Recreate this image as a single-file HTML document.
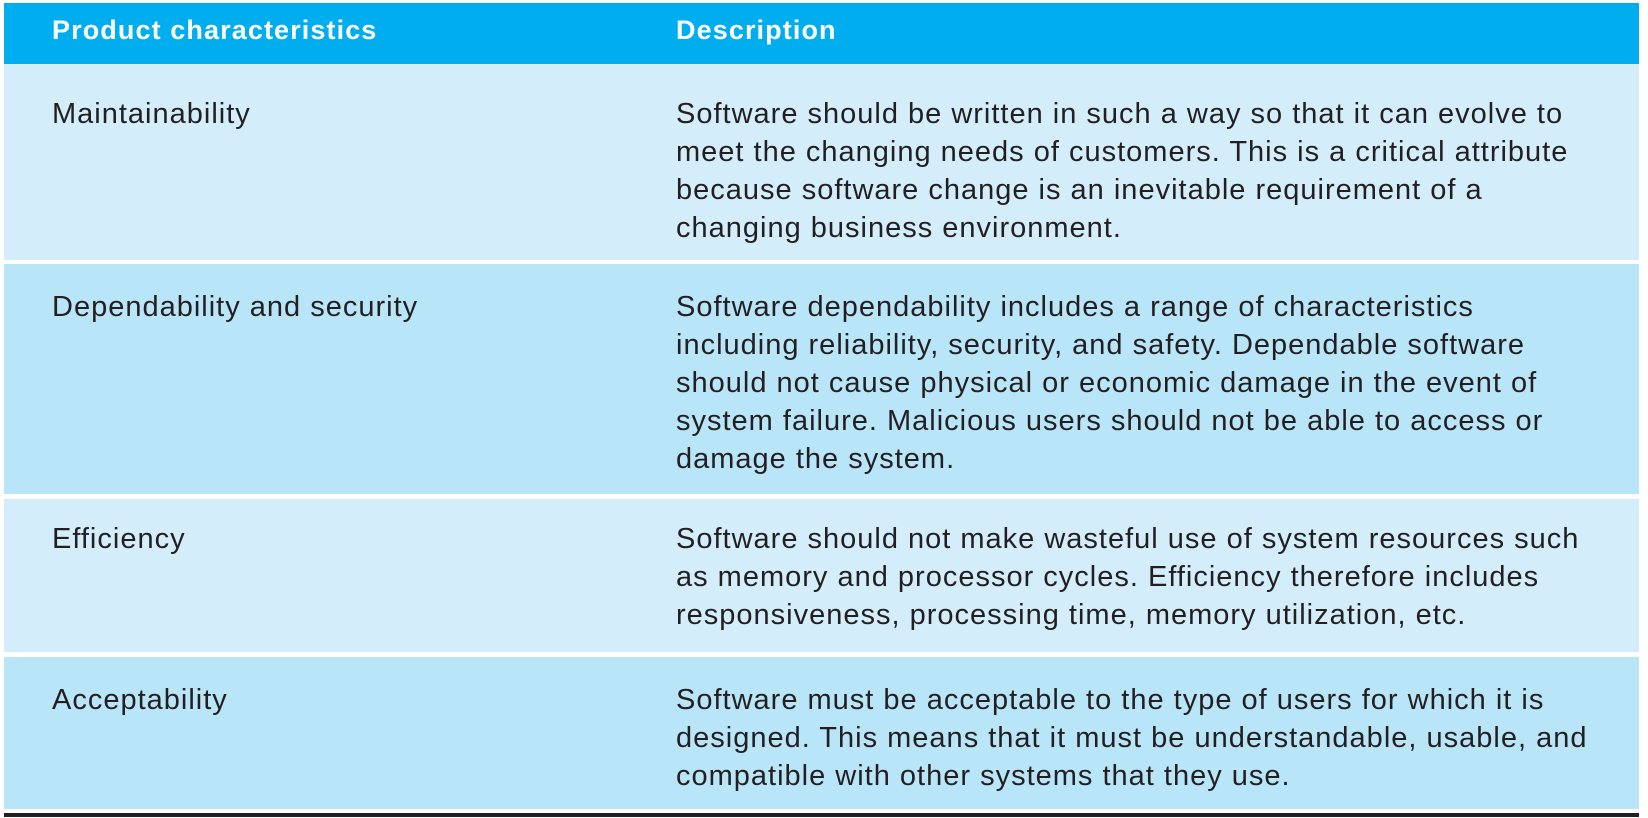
<!DOCTYPE html>
<html><head><meta charset="utf-8"><style>
*{margin:0;padding:0;box-sizing:border-box}
body{width:1648px;height:818px;background:#fff;position:relative;overflow:hidden;font-family:"Liberation Sans",sans-serif;color:#231f20}
.r{position:absolute;left:4px;width:1635px}
.t{position:absolute;font-size:29px;letter-spacing:1px;line-height:38px;white-space:nowrap}
.h{position:absolute;font-size:27px;letter-spacing:1.1px;font-weight:bold;color:#fff;line-height:30px;white-space:nowrap}
</style></head><body>
<div class="r" style="top:3px;height:61px;background:#00aeef"></div>
<div class="h" style="left:52px;top:15px">Product characteristics</div>
<div class="h" style="left:676px;top:15px">Description</div>

<div class="r" style="top:64px;height:196px;background:#d3eefa"></div>
<div class="r" style="top:264px;height:230px;background:#b9e5f9"></div>
<div class="r" style="top:499px;height:153px;background:#d3eefa"></div>
<div class="r" style="top:657px;height:152px;background:#b9e5f9"></div>
<div class="r" style="top:813px;height:4px;background:#231f20"></div>

<div class="t" style="left:52px;top:95px">Maintainability</div>
<div class="t" style="left:676px;top:95px">Software should be written in such a way so that it can evolve to<br>meet the changing needs of customers. This is a critical attribute<br>because software change is an inevitable requirement of a<br>changing business environment.</div>

<div class="t" style="left:52px;top:288px">Dependability and security</div>
<div class="t" style="left:676px;top:288px">Software dependability includes a range of characteristics<br>including reliability, security, and safety. Dependable software<br>should not cause physical or economic damage in the event of<br>system failure. Malicious users should not be able to access or<br>damage the system.</div>

<div class="t" style="left:52px;top:520px">Efficiency</div>
<div class="t" style="left:676px;top:520px">Software should not make wasteful use of system resources such<br>as memory and processor cycles. Efficiency therefore includes<br>responsiveness, processing time, memory utilization, etc.</div>

<div class="t" style="left:52px;top:681px">Acceptability</div>
<div class="t" style="left:676px;top:681px">Software must be acceptable to the type of users for which it is<br>designed. This means that it must be understandable, usable, and<br>compatible with other systems that they use.</div>
</body></html>
